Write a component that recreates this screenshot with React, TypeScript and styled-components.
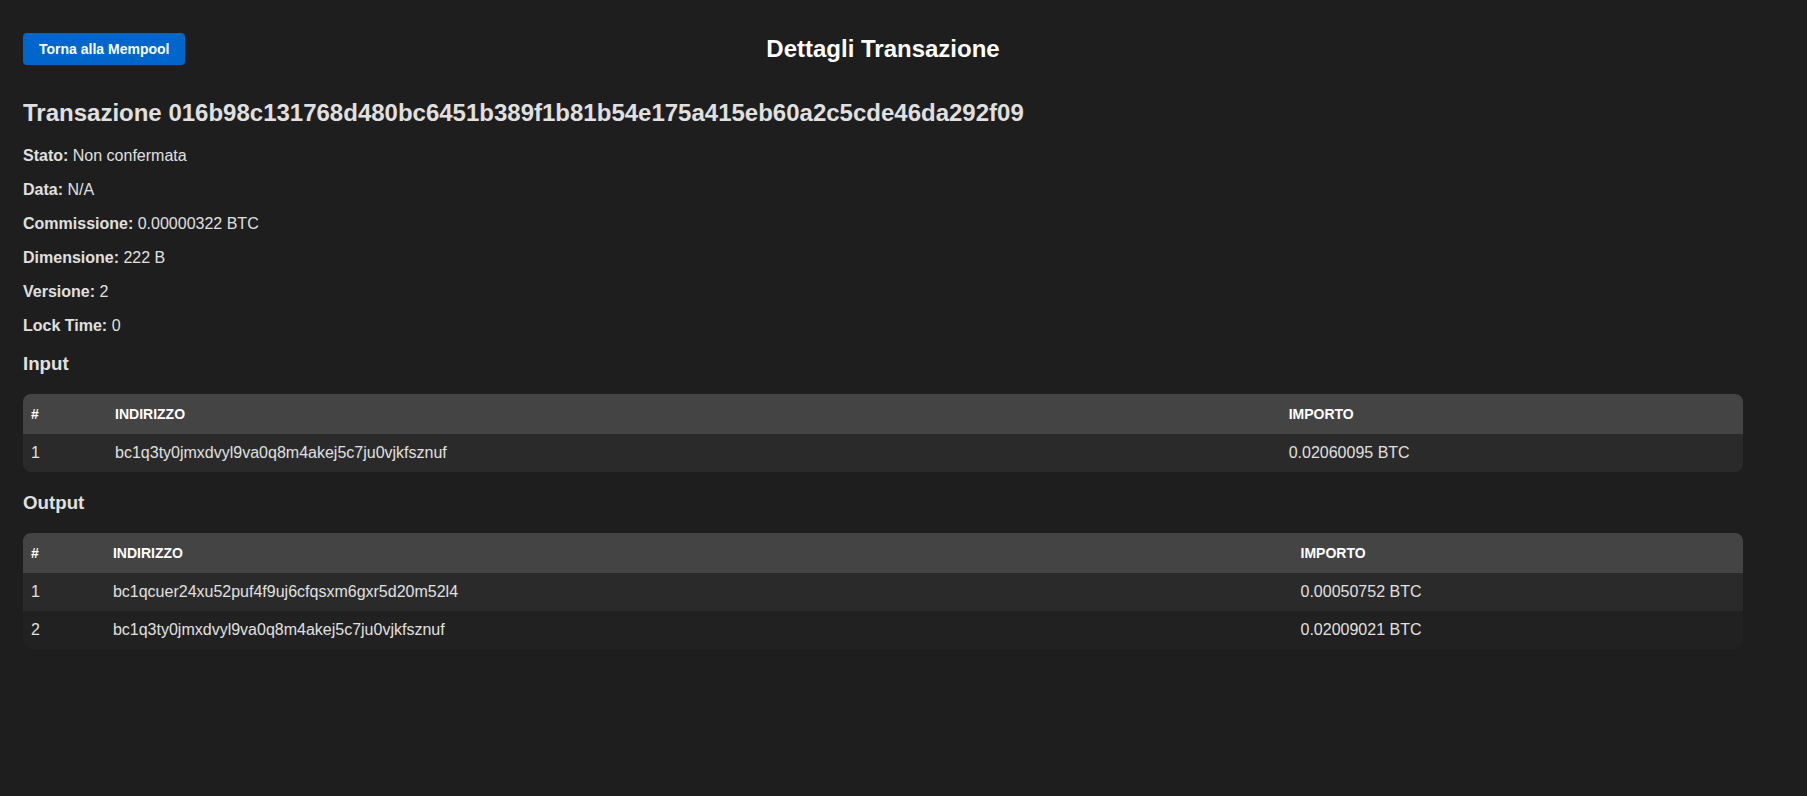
import React from "react";
import styled, { createGlobalStyle } from "styled-components";

const GlobalStyle = createGlobalStyle`
  html, body {
    margin: 0;
    padding: 0;
    background: #1e1e1e;
  }
  body {
    font-family: "Liberation Sans", Arial, sans-serif;
    color: #e0e0e0;
    min-height: 100vh;
  }
  * { box-sizing: border-box; }
`;

const Page = styled.div`
  padding: 33px 64px 40px 23px;
`;

const Header = styled.header`
  display: grid;
  grid-template-columns: 1fr auto 1fr;
  align-items: center;
  height: 32px;
`;

const BackButton = styled.button`
  justify-self: start;
  background: #0066cc;
  color: #ffffff;
  border: none;
  border-radius: 4px;
  padding: 8px 16px;
  font-family: inherit;
  font-size: 14px;
  font-weight: bold;
  line-height: 16px;
  cursor: pointer;
`;

const PageTitle = styled.h1`
  margin: 0;
  font-size: 24px;
  font-weight: bold;
  color: #ffffff;
  text-align: center;
`;

const TxHeading = styled.h2`
  margin: 34px 0 0;
  font-size: 24px;
  font-weight: bold;
  color: #e0e0e0;
  word-break: break-all;
`;

const DetailList = styled.div`
  margin-top: 20px;
  display: flex;
  flex-direction: column;
  gap: 16px;
`;

const DetailRow = styled.div`
  font-size: 16px;
  line-height: 18px;
  color: #e0e0e0;
`;

const Label = styled.strong`
  font-weight: bold;
`;

const SectionTitle = styled.h3`
  margin: 18px 0 19px;
  font-size: 18.72px;
  font-weight: bold;
  color: #e0e0e0;
`;

const TableWrap = styled.div`
  margin-bottom: 20px;
  border-radius: 8px;
  overflow: hidden;
  background: #212121;
`;

const Table = styled.table`
  width: 100%;
  border-collapse: collapse;
`;

const Th = styled.th`
  background: #444444;
  color: #ffffff;
  text-align: left;
  text-transform: uppercase;
  font-size: 14px;
  font-weight: bold;
  line-height: 16px;
  padding: 12px 8px;
`;

const Tr = styled.tr<{ $odd: boolean }>`
  background: ${(p) => (p.$odd ? "#2a2a2a" : "transparent")};
`;

const Td = styled.td`
  font-size: 16px;
  line-height: 18px;
  padding: 10px 8px;
  color: #e0e0e0;
`;

type Entry = { address: string; amount: string };

const inputs: Entry[] = [
  { address: "bc1q3ty0jmxdvyl9va0q8m4akej5c7ju0vjkfsznuf", amount: "0.02060095 BTC" },
];

const outputs: Entry[] = [
  { address: "bc1qcuer24xu52puf4f9uj6cfqsxm6gxr5d20m52l4", amount: "0.00050752 BTC" },
  { address: "bc1q3ty0jmxdvyl9va0q8m4akej5c7ju0vjkfsznuf", amount: "0.02009021 BTC" },
];

const details: [string, string][] = [
  ["Stato", "Non confermata"],
  ["Data", "N/A"],
  ["Commissione", "0.00000322 BTC"],
  ["Dimensione", "222 B"],
  ["Versione", "2"],
  ["Lock Time", "0"],
];

function EntryTable({ rows }: { rows: Entry[] }) {
  return (
    <TableWrap>
      <Table>
        <thead>
          <tr>
            <Th>#</Th>
            <Th>Indirizzo</Th>
            <Th>Importo</Th>
          </tr>
        </thead>
        <tbody>
          {rows.map((r, i) => (
            <Tr key={i} $odd={i % 2 === 0}>
              <Td>{i + 1}</Td>
              <Td>{r.address}</Td>
              <Td>{r.amount}</Td>
            </Tr>
          ))}
        </tbody>
      </Table>
    </TableWrap>
  );
}

export default function App() {
  return (
    <>
      <GlobalStyle />
      <Page>
        <Header>
          <BackButton>Torna alla Mempool</BackButton>
          <PageTitle>Dettagli Transazione</PageTitle>
          <span />
        </Header>
        <TxHeading>
          Transazione 016b98c131768d480bc6451b389f1b81b54e175a415eb60a2c5cde46da292f09
        </TxHeading>
        <DetailList>
          {details.map(([k, v]) => (
            <DetailRow key={k}>
              <Label>{k}:</Label> {v}
            </DetailRow>
          ))}
        </DetailList>
        <SectionTitle>Input</SectionTitle>
        <EntryTable rows={inputs} />
        <SectionTitle>Output</SectionTitle>
        <EntryTable rows={outputs} />
      </Page>
    </>
  );
}
